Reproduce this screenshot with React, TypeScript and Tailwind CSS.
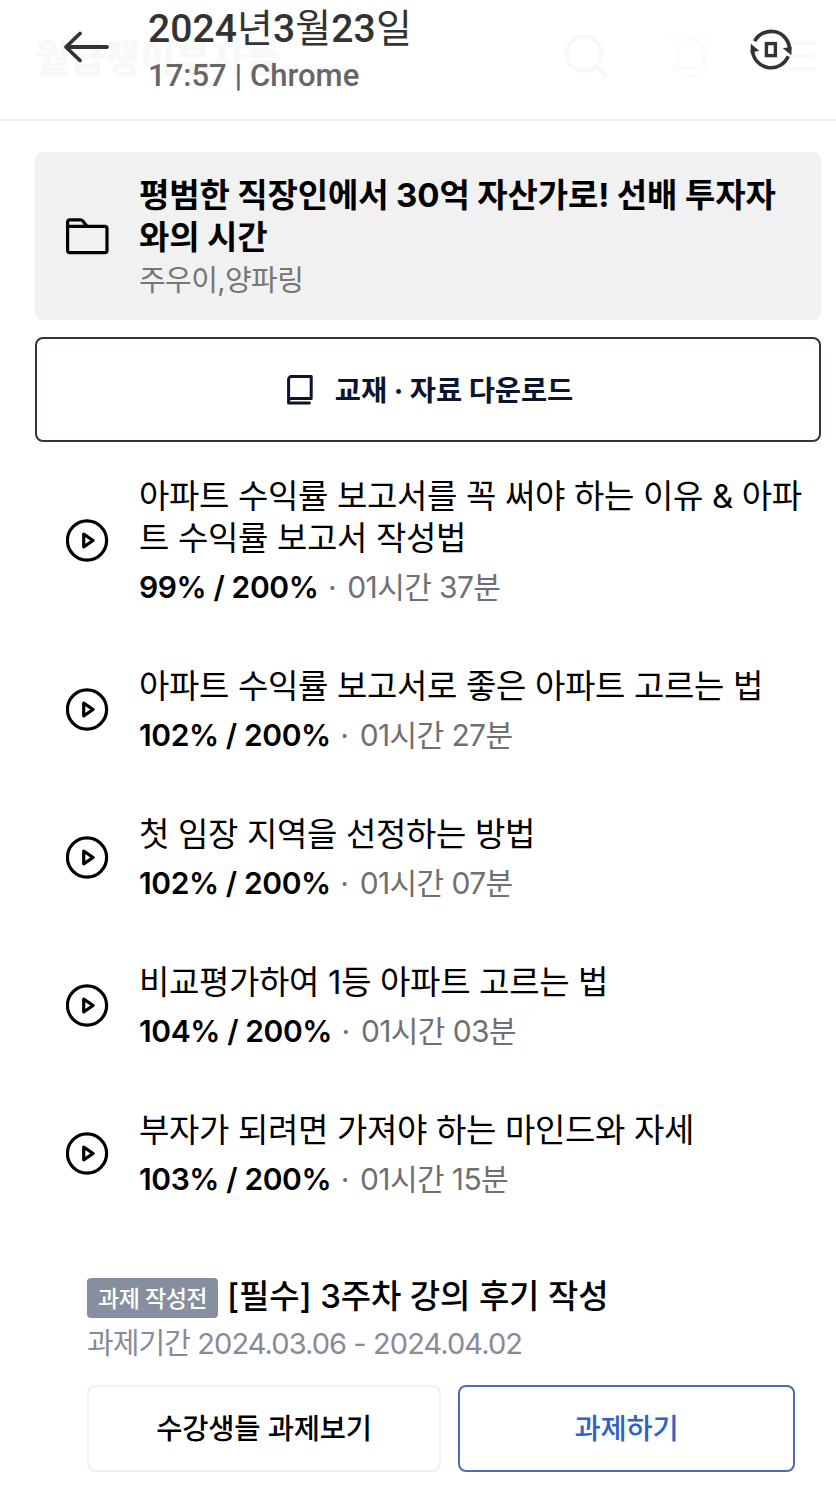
import { clsx } from "clsx";

const lectures = [
  {
    title: "아파트 수익률 보고서를 꼭 써야 하는 이유 & 아파\n트 수익률 보고서 작성법",
    progress: "99% / 200%",
    duration: "01시간 37분",
  },
  {
    title: "아파트 수익률 보고서로 좋은 아파트 고르는 법",
    progress: "102% / 200%",
    duration: "01시간 27분",
  },
  {
    title: "첫 임장 지역을 선정하는 방법",
    progress: "102% / 200%",
    duration: "01시간 07분",
  },
  {
    title: "비교평가하여 1등 아파트 고르는 법",
    progress: "104% / 200%",
    duration: "01시간 03분",
  },
  {
    title: "부자가 되려면 가져야 하는 마인드와 자세",
    progress: "103% / 200%",
    duration: "01시간 15분",
  },
];

const captureDate = [
  { value: "2024", unit: "년" },
  { value: "3", unit: "월" },
  { value: "23", unit: "일" },
];

function BackIcon() {
  return (
    <svg
      className="h-[34px] w-[48px]"
      viewBox="0 0 48 34"
      fill="none"
      stroke="#333333"
      strokeWidth="3.8"
      strokeLinecap="round"
      strokeLinejoin="round"
    >
      <path d="M45 17H4M18 3.5 4 17l14 13.5" />
    </svg>
  );
}

function RotateIcon() {
  return (
    <svg className="h-[44px] w-[44px]" viewBox="0 0 44 44" fill="none" stroke="#333333">
      <path d="M5.6 13.2A18.6 18.6 0 0 1 40.6 21.5" strokeWidth="3.6" />
      <path d="M39.2 28.2A18.6 18.6 0 0 1 3.4 21.5" strokeWidth="3.6" />
      <path d="M1.8 15.8l8.4 7-8.6 2zM42.4 27.2l-8.6-7 8.8-1.4z" fill="#333333" stroke="none" />
      <rect x="17.4" y="15.6" width="9" height="12" strokeWidth="3.4" />
    </svg>
  );
}

function FolderIcon() {
  return (
    <svg
      className="h-[37px] w-[43px]"
      viewBox="0 0 43 37"
      fill="none"
      stroke="black"
      strokeWidth="3.2"
      strokeLinejoin="round"
    >
      <path d="M1.6 8.4V32.6a2 2 0 0 0 2 2h35.4a2 2 0 0 0 2-2V10.4a2 2 0 0 0-2-2zM1.6 8.4V3.8a2 2 0 0 1 2-2h10.8a3 3 0 0 1 2.2 1l4.6 5.6" />
    </svg>
  );
}

function BookIcon() {
  return (
    <svg
      className="h-[30px] w-[26px]"
      viewBox="0 0 26 30"
      fill="none"
      stroke="#0b1530"
      strokeWidth="3"
      strokeLinecap="round"
      strokeLinejoin="round"
    >
      <path d="M1.6 28V4.4a3 3 0 0 1 3-3H24.2v22.2H3.8a2.1 2.1 0 0 0-2.1 2.1M1.6 28H22.4" />
    </svg>
  );
}

function PlayIcon() {
  return (
    <svg
      className="h-[43px] w-[43px] shrink-0"
      viewBox="0 0 43 43"
      fill="none"
      stroke="black"
      strokeWidth="3.2"
      strokeLinejoin="round"
    >
      <circle cx="21" cy="21.5" r="19.6" />
      <path d="M17.7 15.2v12.6l9.4-6.3z" />
    </svg>
  );
}

// Site header that is fading out underneath the capture bar
function FadedSiteHeader() {
  return (
    <div className="absolute inset-0" aria-hidden="true">
      <span className="absolute top-[32px] left-[35px] text-[38px] leading-[52px] font-black tracking-[0.1px] whitespace-nowrap text-[#f8f8f8]">
        월급쟁이부자들
      </span>
      <svg
        className="absolute top-[30px] left-[560px] h-[52px] w-[260px]"
        viewBox="0 0 260 52"
        fill="none"
        stroke="#f8f8f8"
        strokeWidth="4"
        strokeLinecap="round"
      >
        <circle cx="24" cy="24" r="17.5" />
        <path d="M37 37l9 9" />
        <path
          d="M114 39h34M118 38V22a13 13 0 0 1 26 0v15M126 46h10M112 9l5-4M150 9l-5-4"
          stroke="#fefbf7"
        />
        <path d="M231 13h22M231 26h22M231 39h22" strokeWidth="5" />
      </svg>
    </div>
  );
}

export default function App() {
  return (
    <div className="flex h-[1494px] w-[836px] flex-col overflow-hidden bg-white font-[Inter,'Noto_Sans_CJK_KR',sans-serif] text-black">
      <header className="relative h-[121px] shrink-0 border-b-2 border-[#f0f0f0]">
        <FadedSiteHeader />
        <div className="relative flex pt-2 font-[Roboto,'Noto_Sans_CJK_KR',sans-serif]">
          <div className="w-[148px] shrink-0 pt-[22px] pl-[62px]">
            <BackIcon />
          </div>
          <div className="flex-1 whitespace-nowrap">
            <div className="text-[39px] leading-[42px] tracking-[0.1px] text-[#333333]">
              {captureDate.map(({ value, unit }) => (
                <span key={unit}>
                  <span className="font-medium">{value}</span>
                  {unit}
                </span>
              ))}
            </div>
            <div className="pt-[8px] text-[31px] leading-[36px] font-medium tracking-[0.02px] text-[#666666]">
              17:57 | Chrome
            </div>
          </div>
          <div className="pt-5 pr-[43px]">
            <RotateIcon />
          </div>
        </div>
      </header>

      <main className="flex flex-col pt-[31px] pr-[15px] pl-[35px]">
        <section className="flex h-[168px] items-center rounded-lg bg-[#f1f1f1] pl-[31px]">
          <FolderIcon />
          <div className="pt-[3px] pl-[30px] whitespace-nowrap">
            <h1 className="text-[33px] leading-[42px] font-bold tracking-[-0.14px]">
              평범한 직장인에서 30억 자산가로! 선배 투자자
              <br />
              와의 시간
            </h1>
            <p className="pt-[3px] text-[29px] leading-[40px] tracking-[-0.6px] text-[#767676]">
              주우이,양파링
            </p>
          </div>
        </section>

        <button className="mt-[17px] flex h-[105px] items-center justify-center gap-[22px] rounded-lg border-2 border-[#2b3548] pl-[4px] text-[#0b1530]">
          <BookIcon />
          <span className="pt-[2px] text-[28.5px] leading-[40px] font-bold tracking-[-0.1px]">
            교재 · 자료 다운로드
          </span>
        </button>

        <ul className="flex flex-col gap-[60px] pt-[33px] pl-[31px]">
          {lectures.map((lecture) => (
            <li key={lecture.title} className="flex items-center gap-[30px]">
              <PlayIcon />
              <div className="whitespace-pre">
                <h2 className="text-[33px] leading-[42px] tracking-[-0.34px]">
                  {lecture.title}
                </h2>
                <p className="mt-[10px] text-[30px] leading-[36px] text-[#707070]">
                  <span className="font-semibold tracking-[-0.4px] text-black">
                    {lecture.progress}
                  </span>
                  <span className="tracking-[1.1px]">{" · "}</span>
                  <span className="tracking-[-0.6px]">{lecture.duration}</span>
                </p>
              </div>
            </li>
          ))}
        </ul>

        <section className="mt-[77px] mr-[26px] ml-[52px] whitespace-nowrap">
          <div className="flex items-center gap-[9px]">
            <span className="mt-[4px] flex h-[40px] w-[131px] items-center justify-center rounded bg-[#868fa0] pt-[2px] text-[23px] font-medium tracking-[-0.5px] text-white">
              과제 작성전
            </span>
            <h2 className="text-[33px] leading-[42px] font-medium tracking-[-0.14px]">
              [필수] 3주차 강의 후기 작성
            </h2>
          </div>
          <p className="mt-[6px] text-[29px] leading-[40px] tracking-[-0.92px] text-[#868b98]">
            과제기간 2024.03.06 - 2024.04.02
          </p>
          <div className="mt-[21px] flex gap-[17px] text-[28.5px]">
            {[
              { label: "수강생들 과제보기", className: "w-[354px] border-[#f1f1f1] text-black" },
              { label: "과제하기", className: "flex-1 border-[#4a6fae] text-[#2f62c9]" },
            ].map(({ label, className }) => (
              <button
                key={label}
                className={clsx(
                  "h-[87px] rounded-lg border-2 pt-[2px] font-medium tracking-[-0.2px]",
                  className,
                )}
              >
                {label}
              </button>
            ))}
          </div>
        </section>
      </main>
    </div>
  );
}
